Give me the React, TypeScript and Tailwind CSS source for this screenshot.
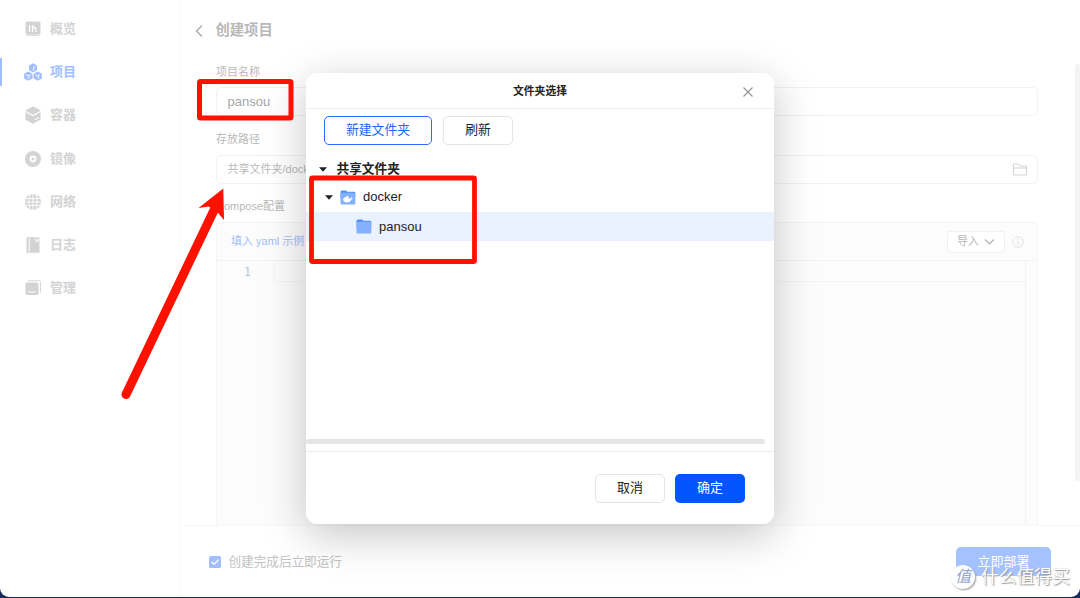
import { ReactNode } from "react";

type NavItem = { label: string; icon: ReactNode; active?: boolean };

const navItems: NavItem[] = [
  {
    label: "概览",
    icon: (
      <>
        <rect x="1.5" y="1.5" width="15" height="12.5" rx="1.5" fill="currentColor" />
        <path d="M2.5 14h13v2h-13z" fill="currentColor" opacity=".75" />
        <path d="M5.7 5v7M8.7 5v7M8.7 7.5h1.5q1.700 0 1.700 1.500V12" stroke="#fff" strokeWidth="1.3" fill="none" />
      </>
    ),
  },
  {
    label: "项目",
    active: true,
    icon: (
      <>
        <path
          d="M9 .3l4 2.2v4.7L9 9.4 5 7.2V2.5zM4.3 8.4l4.2 2.3v4.8l-4.2 2.3L.1 15.5v-4.8zM13.7 8.4l4.2 2.3v4.8l-4.2 2.3-4.2-2.3v-4.8z"
          fill="currentColor"
        />
        <path
          d="M9 4.800l2.400-1.300M9.600 5.200v2.500M4.300 13l2.400-1.300M4.900 13.400v2.500M1.800 11.700L4.300 13M13.700 13l2.400-1.300M14.300 13.400v2.500M11.300 11.700l2.400 1.300"
          stroke="#fff"
          strokeWidth="1"
          fill="none"
        />
      </>
    ),
  },
  {
    label: "容器",
    icon: (
      <>
        <path d="M9 .3L16.6 4.6v9L9 17.8 1.4 13.6v-9z" fill="currentColor" />
        <path d="M1.2 5.3L9 9.6l7.8-4.3M10.8 14l4-2.4" stroke="#fff" strokeWidth="1.1" fill="none" />
      </>
    ),
  },
  {
    label: "镜像",
    icon: (
      <>
        <circle cx="9" cy="9" r="5.7" stroke="currentColor" strokeWidth="4.6" fill="none" />
        <circle cx="9" cy="9" r="1.5" fill="currentColor" />
      </>
    ),
  },
  {
    label: "网络",
    icon: (
      <>
        <circle cx="9" cy="9" r="8" fill="currentColor" />
        <path
          d="M9 0v18M0 9h18M1 5.6h16M1 12.4h16M6 1Q3.6 9 6 17M12 1q2.4 8 0 16"
          stroke="#fff"
          strokeWidth=".9"
          fill="none"
        />
      </>
    ),
  },
  {
    label: "日志",
    icon: (
      <>
        <path d="M2.5 1.2h13v15.6h-13z" fill="currentColor" />
        <path d="M5.2 2.2v13.6M11.8 2.2v3.3l1.3-.8 1.2.8V2.2" stroke="#fff" strokeWidth="1" fill="none" />
      </>
    ),
  },
  {
    label: "管理",
    icon: (
      <>
        <rect x="1.5" y="3.5" width="13" height="12.5" rx="1.8" fill="currentColor" />
        <path d="M4 1.8h11q1.4 0 1.4 1.4v10.5" stroke="currentColor" strokeWidth="1" fill="none" />
        <path d="M4.5 13h7" stroke="#fff" strokeWidth="1" />
      </>
    ),
  },
];

function Sidebar() {
  return (
    <nav className="flex w-[180px] shrink-0 flex-col border-r border-[#f8f8f8] pt-[7.4px]">
      {navItems.map((item) => (
        <div
          key={item.label}
          className={
            item.active
              ? "flex h-[43.2px] items-center text-[#a1bfff]"
              : "flex h-[43.2px] items-center text-[#d3d3d3]"
          }
        >
          <div className={item.active ? "h-7 w-0.5 bg-[#a1bfff]" : "h-7 w-0.5"} />
          <svg className="ml-[21.5px] size-[18px]" viewBox="0 0 18 18">
            {item.icon}
          </svg>
          <span className="ml-[8.5px] text-[13px] leading-5 font-bold">{item.label}</span>
        </div>
      ))}
    </nav>
  );
}

function FolderIcon({ docker }: { docker?: boolean }) {
  return (
    <svg className="h-[15px] w-4 shrink-0" viewBox="0 0 16 15">
      <path d="M.5 2Q.5.5 2 .5h4l1.5 1.3H14q1.3 0 1.3 1.3V8H.5z" fill="#4c90f9" />
      <rect x=".5" y="2.800" width="14.8" height="11.7" rx="1.3" fill="#84b0ff" />
      {docker && (
        <path
          d="M3 8.500h1.3V7.300h2V6h2.2v2.500h2.100q.2-.9.9-1.3.5.6.4 1.2.6 0 1 .3-.5.9-1.6.9-1 3-4.4 3Q3.2 12.600 3 8.500z"
          fill="#fff"
        />
      )}
    </svg>
  );
}

function Caret() {
  return (
    <svg className="h-[5px] w-2 shrink-0" viewBox="0 0 8 5">
      <path d="M0 .3h8L4 4.700z" fill="#222" />
    </svg>
  );
}

function ProjectForm() {
  return (
    <main className="flex min-w-0 flex-1 flex-col">
      <div className="flex h-[525px] shrink-0 flex-col pr-[42px] pl-9 text-[11px] text-[#b8b8b8]">
        <div className="-ml-[21px] flex h-[62px] shrink-0 items-center">
          <svg className="h-3.5 w-2" viewBox="0 0 8 14">
            <path d="M7 1.500L1.500 7 7 12.500" stroke="#aaa" strokeWidth="1.4" fill="none" />
          </svg>
          <span className="ml-[12.5px] text-[14.3px] font-bold">创建项目</span>
        </div>
        <div className="flex h-[25px] shrink-0 items-center pb-[5px]">项目名称</div>
        <div className="flex h-[29px] shrink-0 items-center rounded-[5px] border border-[#f2f2f2] px-[10.5px] text-[13px] text-[#a6a6a6]">
          pansou
        </div>
        <div className="flex h-[39px] shrink-0 items-center pt-[7px]">存放路径</div>
        <div className="flex h-[29px] shrink-0 items-center justify-between rounded-[5px] border border-[#f2f2f2] px-[10.5px]">
          <span>共享文件夹/docker/pansou</span>
          <svg className="h-[13px] w-3.5" viewBox="0 0 14 13">
            <path d="M.5 12V1h4.800l1.500 2h6.700v9zM.5 5h13" stroke="#d3d3d3" fill="none" />
          </svg>
        </div>
        <div className="flex h-[38px] shrink-0 items-center pt-[7px]">Compose配置</div>
        <div className="h-[303px] shrink-0 rounded-t-[5px] border border-b-0 border-[#f5f5f5] bg-[#fcfcfc]">
          <div className="flex h-[38px] items-center border-b border-[#f3f3f3] pr-[13px] pl-[14px]">
            <span className="flex-1 text-[11px] text-[#a1bfff]">填入 yaml 示例</span>
            <div className="flex h-[22px] w-[58px] items-center justify-center gap-[5px] rounded-[3px] border border-[#f0f0f0] bg-white">
              导入
              <svg className="h-1.5 w-[11px]" viewBox="0 0 11 6">
                <path d="M1 .5l4.500 4.300L10 .5" stroke="#bbb" strokeWidth="1.5" fill="none" />
              </svg>
            </div>
            <svg className="ml-[7px] size-3" viewBox="0 0 12 12">
              <circle cx="6" cy="6" r="5.300" stroke="#e3e3e3" fill="none" />
              <path d="M6 3v1.200M6 5v4" stroke="#ddd" />
            </svg>
          </div>
          <div className="flex h-[264px]">
            <div className="w-[57px] pt-[2px] pl-[27px] font-['DejaVu_Sans_Mono',monospace] text-[11.500px] leading-[18px] text-[#bcc3d6]">
              1
            </div>
            <div className="flex-1 border-r border-[#f1f1f1]">
              <div className="h-[21px] border-b border-l border-[#f5f5f5]" />
            </div>
            <div className="w-[11px]" />
          </div>
        </div>
      </div>
      <div className="flex h-[72px] shrink-0 items-center border-t border-[#f8f8f8] pr-[29px] pl-[29px]">
        <svg className="size-3" viewBox="0 0 12 12">
          <rect width="12" height="12" rx="1.500" fill="#a1bfff" />
          <path d="M2.500 5.800L5 8.300l4.700-4.700" stroke="#fff" strokeWidth="1.300" fill="none" />
        </svg>
        <span className="ml-[7.5px] flex-1 pt-0.5 text-[12.600px] text-[#c2c2c2]">创建完成后立即运行</span>
        <div className="flex h-[29px] w-[95px] items-center justify-center rounded-[5px] bg-[#a4c2ff] text-[13px] text-white">
          立即部署
        </div>
      </div>
    </main>
  );
}

function FolderDialog() {
  return (
    <section className="absolute top-[73px] left-[306px] z-20 flex h-[451px] w-[468px] flex-col rounded-[11px] bg-white text-[13px] text-[#222] shadow-[0_11px_44px_rgba(0,0,0,0.23)]">
      <header className="flex h-9 shrink-0 items-center border-b border-[#f1f1f1] pt-0.5 pr-[21px] pl-[31px]">
        <h2 className="flex-1 text-center text-[10.8px] font-bold">文件夹选择</h2>
        <svg className="size-2.5" viewBox="0 0 10 10">
          <path d="M.5.5l9 9M9.500.5l-9 9" stroke="#929292" strokeWidth="1.100" />
        </svg>
      </header>
      <div className="flex h-[50px] shrink-0 items-center gap-[11px] px-[18px] pb-[7px]">
        <button className="h-[29px] w-[108px] rounded-[5px] border border-[#2e6bff] pb-px text-[12.8px] text-[#1b66ff]">
          新建文件夹
        </button>
        <button className="h-[29px] w-[70px] rounded-[5px] border border-[#e4e4e4] pb-px text-[12.8px]">刷新</button>
      </div>
      <div className="h-[280px] shrink-0">
        <div className="flex h-[24px] items-center pb-1 pl-[13px]">
          <Caret />
          <span className="ml-[9.5px] pt-0.5 text-[12.700px] font-bold">共享文件夹</span>
        </div>
        <div className="flex h-[29px] items-center pb-px pl-[19px]">
          <Caret />
          <span className="ml-[7px] flex">
            <FolderIcon docker />
          </span>
          <span className="ml-[7px]">docker</span>
        </div>
        <div className="flex h-[29px] items-center bg-[#eaf1ff] pl-[50px]">
          <FolderIcon />
          <span className="ml-[7px]">pansou</span>
        </div>
      </div>
      <div className="mr-[9px] h-[5px] shrink-0 rounded-full bg-[#e5e5e5]" />
      <footer className="mt-[7px] flex flex-1 items-center justify-end gap-[10px] border-t border-[#ededed] pr-[29px]">
        <button className="h-[29px] w-[70px] rounded-[5px] border border-[#e4e4e4]">取消</button>
        <button className="h-[29px] w-[70px] rounded-[5px] bg-[#0055ff] text-white">确定</button>
      </footer>
    </section>
  );
}

// red boxes and arrow drawn over the window
function Annotations() {
  return (
    <svg className="absolute inset-0 z-30 h-[598px] w-[1080px]" viewBox="0 0 1080 598">
      <g fill="none" stroke="#ff1100">
        <rect x="199.500" y="81.500" width="91.500" height="36.500" rx="1" strokeWidth="5" />
        <rect x="311.500" y="178" width="163" height="83.500" rx="1" strokeWidth="4.800" />
        <path d="M126 394.500L216 206" strokeWidth="9" strokeLinecap="round" />
      </g>
      <path d="M223.300 188.500L224 220l-7.500-9-8-4.500-10 1.500z" fill="#ff1100" />
    </svg>
  );
}

function Watermark() {
  return (
    <div className="absolute top-[563px] left-[951px] z-30 flex items-center text-white">
      <span className="flex size-[24px] items-center justify-center rounded-full bg-white text-[16px] text-[#94a8cf] italic shadow-[1px_1px_2px_#999]">
        值
      </span>
      <span className="ml-[6px] pt-px text-[17.8px] leading-[26px] whitespace-nowrap [text-shadow:1px_1px_1px_#999,0_0_1px_#bbb]">
        什么值得买
      </span>
    </div>
  );
}

export default function App() {
  return (
    <div className="relative h-[598px] w-[1080px] overflow-hidden bg-[#172b5c] font-['Liberation_Sans','Noto_Sans_CJK_SC',sans-serif]">
      <div className="relative flex h-[597px] overflow-hidden rounded-b-[9px] bg-white">
        <Sidebar />
        <ProjectForm />
        <div className="absolute top-16 right-0 h-[417px] w-[5px] rounded-full bg-[#f3f3f3]" />
        <FolderDialog />
      </div>
      <Annotations />
      <Watermark />
    </div>
  );
}
